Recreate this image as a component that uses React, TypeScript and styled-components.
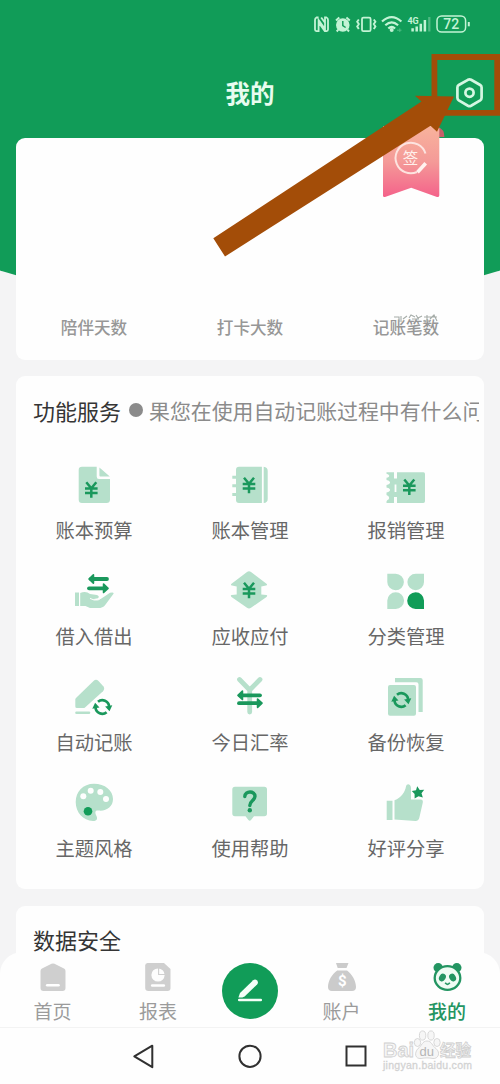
import React from 'react';
import styled, { createGlobalStyle } from 'styled-components';

const GREEN = '#119c58';
const DARK = '#1a985c';
const LIGHT = '#b6e0cb';
const STATUS = '#c3f3d5';

const GlobalStyle = createGlobalStyle`
  * { box-sizing: border-box; }
  body { margin: 0; font-family: "Noto Sans", "Noto Sans CJK SC", sans-serif; }
  svg { display: block; flex: none; overflow: visible; }
`;

const Page = styled.div`
  position: relative;
  width: 500px;
  height: 1084px;
  overflow: hidden;
  display: flex;
  flex-direction: column;
  background: #f4f4f5;
  font-family: "Noto Sans CJK SC", sans-serif;
`;

const Backdrop = styled.div`
  position: absolute;
  top: 0;
  left: -100px;
  width: 700px;
  height: 303px;
  background: ${GREEN};
  border-radius: 0 0 50% 50% / 0 0 108px 108px;
`;

const StatusBar = styled.header`
  position: relative;
  height: 48px;
  padding: 0 30px 0 0;
  display: flex;
  align-items: center;
  justify-content: flex-end;
`;

const TitleBar = styled.div`
  position: relative;
  height: 90px;
  padding: 0 16px;
  display: grid;
  grid-template-columns: 1fr auto 1fr;
  align-items: center;
`;

const Title = styled.h1`
  grid-column: 2;
  margin: 0 0 1px;
  color: #e8fcef;
  font-size: 24.5px;
  line-height: 36px;
  font-weight: 700;
`;

const SettingsButton = styled.div`
  justify-self: end;
`;

const Content = styled.main`
  position: relative;
  height: 836px;
  flex: none;
  padding: 0 16px;
  display: flex;
  flex-direction: column;
  gap: 16.5px;
  overflow: hidden;
`;

const Card = styled.section<{ $height: number }>`
  flex: none;
  height: ${({ $height }) => $height}px;
  background: #fefefe;
  border-radius: 9px;
`;

const StatsCard = styled(Card)`
  display: flex;
  align-items: flex-end;
  padding-bottom: 21px;
`;

const Stat = styled.div`
  position: relative;
  flex: 1;
  text-align: center;
  font-size: 16.6px;
  line-height: 24px;
  font-weight: 500;
  color: #979797;
`;

const Smudge = styled.div`
  position: absolute;
  left: 64px;
  top: -1px;
`;

const SectionHead = styled.div`
  display: flex;
  align-items: center;
  padding: 16px 5px 0 17px;
  height: 51px;
`;

const SectionTitle = styled.h2`
  margin: 0;
  flex: none;
  font-size: 22px;
  line-height: 36px;
  font-weight: 400;
  color: #353535;
`;

const Dot = styled.i`
  flex: none;
  width: 14px;
  height: 14px;
  margin: 1px 6px 0 8px;
  border-radius: 50%;
  background: #8b8b8b;
`;

const Notice = styled.span`
  flex: 1;
  overflow: hidden;
  white-space: nowrap;
  font-size: 20.9px;
  line-height: 36px;
  color: #8b8b8b;
`;

const ServiceGrid = styled.div`
  display: grid;
  grid-template-columns: repeat(3, 156px);
  grid-auto-rows: 106px;
  padding-top: 38px;
`;

const Service = styled.div`
  display: flex;
  flex-direction: column;
  align-items: center;
  gap: 11px;
  color: #676767;
  font-size: 19.3px;
  line-height: 28px;
`;

const TabBar = styled.nav`
  position: relative;
  flex: none;
  height: 76px;
  margin-top: -22px;
  display: grid;
  grid-template-columns: 105px 106px 78px 105px 106px;
  background: #fefefe;
  border-radius: 22px 22px 0 0;
  border-bottom: 1px solid #f3f3f3;
`;

const Tab = styled.div<{ $active?: boolean }>`
  display: flex;
  flex-direction: column;
  align-items: center;
  gap: 6px;
  padding-top: 11px;
  font-size: 19px;
  line-height: 28px;
  font-weight: ${({ $active }) => ($active ? 500 : 400)};
  color: ${({ $active }) => ($active ? '#239562' : '#9b9b9b')};
`;

const AddButton = styled.div`
  align-self: center;
  justify-self: center;
  width: 56px;
  height: 56px;
  margin-top: 2px;
  border-radius: 50%;
  background: ${GREEN};
  display: flex;
  align-items: center;
  justify-content: center;
`;

const SystemNav = styled.footer`
  position: relative;
  flex: 1;
  background: #fefefe;
  display: flex;
  justify-content: center;
  align-items: center;
  gap: 81.5px;
`;

const Watermark = styled.div`
  position: absolute;
  left: 383px;
  top: 0;
  width: 92px;
  font-family: "Liberation Sans", "Noto Sans CJK SC", sans-serif;
`;

const RibbonLayer = styled.div`
  position: absolute;
  left: 380px;
  top: 122px;
`;

const PointerLayer = styled.div`
  position: absolute;
  left: 0;
  top: 0;
`;

const Yen = ({ x, y }: { x: number; y: number }) => (
  <path
    transform={`translate(${x} ${y})`}
    d="M-5-7.5 0-1.5 5-7.5M0-1.5V8M-6.3-1.2H6.3M-6.3 3.2H6.3"
    fill="none"
    stroke={DARK}
    strokeWidth="2.5"
  />
);

const Swap = ({ x, y, w, gap, dx }: { x: number; y: number; w: number; gap: number; dx: number }) => (
  <g transform={`translate(${x} ${y})`} stroke={DARK} strokeWidth="3.8" strokeLinecap="round" strokeLinejoin="round" fill={DARK}>
    <path d={`M3 0H${w}`} />
    <path d="M1 0 5.4-4.1V4.1Z" strokeWidth="1.7" />
    <path d={`M${dx} ${gap}H${w + dx - 3}`} />
    <path d={`M${w + dx} ${gap}l-4.4-4.1v8.2Z`} strokeWidth="1.7" />
  </g>
);

const Refresh = ({ x, y }: { x: number; y: number }) => (
  <g transform={`translate(${x} ${y})`} fill="none" stroke={DARK} strokeWidth="2.7">
    <path d="M-4.3-5.2A6.8 6.8 0 0 1 6.8-.5M4.3 5.2A6.8 6.8 0 0 1-6.8 .5" />
    <path d="M2.8-.4 10-1.8 7.2 4.2ZM-2.8 .4-10 1.8-7.2-4.2Z" fill={DARK} stroke="none" />
  </g>
);

const services: { label: string; icon: React.ReactNode }[] = [
  {
    label: '账本预算',
    icon: (
      <>
        <path fill={LIGHT} d="M8 1.7H22.7V11.5Q22.7 14 25 14H36V34.5Q36 38 32.5 38H8Q4.7 38 4.7 34.5V5Q4.7 1.7 8 1.7ZM25.4 2.5 35.8 11.6H26.5Q25.4 11.6 25.4 10.5Z" />
        <Yen x={17.3} y={24.7} />
      </>
    ),
  },
  {
    label: '账本管理',
    icon: (
      <>
        <path fill={LIGHT} d="M9 1.7H31.9V38H9Q6 38 6 35V31H2.3V28H6V22.3H2.3V19.3H6V13.7H2.3V10.7H6V5Q6 1.7 9 1.7ZM33.7 1.7Q37.7 2 37.7 6V34Q37.7 37.7 33.7 38Z" />
        <Yen x={19} y={20.3} />
      </>
    ),
  },
  {
    label: '报销管理',
    icon: (
      <>
        <path fill={LIGHT} d="M.5 7.3H8V13.5H11V7.3H37.5Q39 7.3 39 9V36.3Q39 38 37.3 38H11V32H8V38H.5Q0 35.5 2.5 34.5 4 33 2.5 31.3L.5 30V27.5Q4.5 26.5 4 24.5 3.5 23 .5 22.5V20Q4.5 19 4 17 3.5 15.5.5 15V12.8Q3.5 12.5 3.2 10.6 2.8 9 .5 8.7Z" />
        <path d="M8.6 19.5H10.4V27H8.6Z" fill="#fefefe" />
        <Yen x={23.3} y={22} />
      </>
    ),
  },
  {
    label: '借入借出',
    icon: (
      <>
        <path fill={LIGHT} d="M1 21.5H5V35H1ZM6.2 22Q12 19.8 16 23L23 24Q26 25.2 24 27.3L18.5 28.3Q23 30 27 27.8L36 21.8Q39.5 20.8 39.7 22.5L31 34.2Q29 37 24 37H16L11.5 35H6.2Z" />
        <path d="M16 27.4 20 29Q25 29.8 27 27" stroke="#fefefe" strokeWidth="1" fill="none" />
        <Swap x={14} y={8} w={19} gap={9.3} dx={1} />
      </>
    ),
  },
  {
    label: '应收应付',
    icon: (
      <>
        <path fill={LIGHT} d="M17 1Q19 -.6 21 1L36.5 12.7Q37.8 14.2 36 14.4L31.3 15.5V23.5L36.3 24Q38 24.5 36.5 26L21 36.8Q19 38 17 36.8L1.5 26Q0 24.5 1.7 24L6.7 23.5V15.5L2 14.4Q.2 14.2 1.5 12.7Z" />
        <Yen x={19} y={19.3} />
      </>
    ),
  },
  {
    label: '分类管理',
    icon: (
      <>
        <path fill={LIGHT} d="M1.3 2.7H9.7A8.3 8.3 0 1 1 1.3 11ZM38 2.7H29.7A8.3 8.3 0 1 0 38 11ZM1.3 38H9.7A8.4 8.4 0 1 0 1.3 29.6Z" />
        <path fill={GREEN} d="M38 38H29.7A8.4 8.4 0 1 1 38 29.6Z" />
      </>
    ),
  },
  {
    label: '自动记账',
    icon: (
      <>
        <path fill={LIGHT} d="M19.5 4Q22 1.6 24.5 4L29.3 9.3Q31.2 12 29 14.2L11 30.5Q10.4 31 9.5 31H3Q1.3 31 1.3 29.4V22.5Q1.3 21.8 2 21Z" />
        <path d="M2.5 35.7H15" stroke={LIGHT} strokeWidth="2.6" strokeLinecap="round" />
        <Refresh x={28.3} y={30} />
      </>
    ),
  },
  {
    label: '今日汇率',
    icon: (
      <>
        <path d="M9.5 2.5 19.7 13 30 2.5M19.7 13V35" fill="none" stroke={LIGHT} strokeWidth="4.8" strokeLinecap="round" />
        <Swap x={7} y={18.3} w={23} gap={7.9} dx={2} />
      </>
    ),
  },
  {
    label: '备份恢复',
    icon: (
      <>
        <path fill={LIGHT} d="M4 8H28Q30 8 30 10V36.7Q30 38.7 28 38.7H4Q2 38.7 2 36.7V10Q2 8 4 8ZM9 1H34.5Q36.7 1 36.7 3.2V35H32.5V7.3Q32.5 5.2 30.4 5.2H9Z" />
        <Refresh x={15.3} y={23} />
      </>
    ),
  },
  {
    label: '主题风格',
    icon: (
      <>
        <path fill={LIGHT} d="M20 .7C31 .7 39 7.5 39 16 39 24 32 28.5 24.5 27.5 20.5 27 21 30 22.5 33 24 36.5 22.5 38 19 38 9 37.5 1.7 29.5 1.7 19 1.7 8.5 9 .7 20 .7Z" />
        <g fill="#fefefe">
          <circle cx="9.3" cy="13.3" r="3" />
          <circle cx="16.7" cy="7.7" r="3" />
          <circle cx="26.3" cy="9" r="3" />
          <circle cx="32" cy="16" r="3" />
        </g>
        <circle cx="14" cy="28.3" r="4.3" fill={GREEN} />
      </>
    ),
  },
  {
    label: '使用帮助',
    icon: (
      <>
        <path fill={LIGHT} d="M5 3.7H34.3Q37 3.7 37 6.5V30.5Q37 33.3 34.3 33.3H24L21 37Q19.7 38.6 18.4 37L15.5 33.3H5Q2.3 33.3 2.3 30.5V6.5Q2.3 3.7 5 3.7Z" />
        <path d="M14.8 13.5C15 7.5 25 7.5 25 13.3 25 17.5 19.8 17.5 19.8 22.5" fill="none" stroke={DARK} strokeWidth="3.4" strokeLinecap="round" />
        <circle cx="19.8" cy="27.3" r="2.2" fill={DARK} />
      </>
    ),
  },
  {
    label: '好评分享',
    icon: (
      <>
        <path fill={LIGHT} d="M.7 17.7H6.5V37H.7ZM8.5 17.3C15.5 14.5 18.8 9.5 20 3.5 20.7 0 24.8.8 25 5V16.5H34.5Q37.3 16.5 36.8 19.5L33.5 34Q32.8 38 29.5 38L8.5 36.5Z" />
        <path fill={DARK} d="M31.2 3.2 33.7 7 38.2 6.8 35.5 10.3 36.8 14.6 32.5 13.2 28.6 15.5 28.6 11 25.8 8 30 7.2Z" />
      </>
    ),
  },
];

const StatusIcons = () => (
  <svg width="156" height="18" viewBox="314 15 156 18" fill="none" stroke={STATUS} strokeWidth="1.8">
    <path d="M318.6 17.5H316.5Q315 18.3 315 20V29.5Q315 31 316.5 31.2H318.6V20L325 29V17.5H326.5Q328 18 328 20V29.5Q328 31 326.5 31.2H324.8L318.6 22.5M321.2 17.5 325 22.7" strokeWidth="1.8" />
    <circle cx="342.8" cy="25" r="6.8" fill={STATUS} stroke="none" />
    <path d="M336 20.5 339.3 17.6M349.8 20.5 346.4 17.6M338.3 29.7 336.7 31.5M347.4 29.7 349 31.5" strokeWidth="2" />
    <path d="M342.8 21V25.5L345.6 27.5" stroke={GREEN} strokeWidth="1.5" />
    <rect x="362" y="17.6" width="8.6" height="13.6" rx="1.4" />
    <path d="M358.8 19.5 357.2 21.8 358.8 24 357.2 26.4 358.8 29M373.8 19.5 375.4 21.8 373.8 24 375.4 26.4 373.8 29" strokeWidth="1.9" />
    <path d="M382 21.5Q391.7 12.8 401.4 21.5M385.3 25.2Q391.7 19.5 398.1 25.2M388.3 28.5Q391.7 25.5 395.1 28.5" strokeWidth="2.2" />
    <circle cx="391.7" cy="30" r="2" fill={STATUS} stroke="none" />
    <path d="M397 30.2H401.5M399.8 28.4V32" stroke="#4fbd84" strokeWidth="1" />
    <path d="M412.6 31.5V28.2M416.7 31.5V26.5M420.8 31.5V23.8M424.9 31.5V20" strokeWidth="2.5" />
    <path d="M429.3 31.5V17" stroke="#4fb983" strokeWidth="2.3" />
    <text x="407.4" y="23.8" fill={STATUS} stroke="none" fontFamily="Roboto, sans-serif" fontSize="9" fontWeight="700">4G</text>
    <rect x="437" y="16" width="28.6" height="16" rx="4.6" strokeWidth="1.5" />
    <path d="M468.8 22V26.3" strokeWidth="2" />
    <text x="451.3" y="29.1" fill={STATUS} stroke="none" textAnchor="middle" fontFamily="Roboto, sans-serif" fontSize="14" fontWeight="500">72</text>
  </svg>
);

const HomeIcon = () => (
  <svg width="28" height="28" viewBox="0 0 28 28">
    <path fill="#cfcfcf" d="M12.5.8Q14 0 15.5.8L25 5.4Q26.5 6.3 26.5 8V25Q26.5 28 23.5 28H4.5Q1.5 28 1.5 25V8Q1.5 6.3 3 5.4Z" />
    <path d="M8.2 22.2H19.5" stroke="#fff" strokeWidth="2.6" strokeLinecap="round" />
  </svg>
);

const ReportIcon = () => (
  <svg width="28" height="28" viewBox="0 0 28 28">
    <path fill="#cfcfcf" d="M3.5 0H20L26.5 6V25Q26.5 28 23.5 28H4.5Q1.2 28 1.2 25V2.5Q1.2 0 3.5 0Z" />
    <circle cx="14" cy="12" r="6.6" fill="#fdfdfd" />
    <path d="M14.6 5V11.5H21" fill="none" stroke="#cfcfcf" strokeWidth="1.1" />
    <path d="M8.2 22.5H19.8" stroke="#fff" strokeWidth="2.6" strokeLinecap="round" />
  </svg>
);

const AccountIcon = () => (
  <svg width="28" height="28" viewBox="0 0 28 28">
    <path fill="#cbcbcb" d="M8 0H20.5L18.5 5H9.7ZM9.2 7.5H19C24 11 28 18 28 24Q28 28 24 28H4Q0 28 0 24C0 18 4 11 9.2 7.5Z" />
    <text x="14.2" y="23.2" textAnchor="middle" fill="#fff" fontFamily="Roboto, sans-serif" fontSize="15" fontWeight="700">$</text>
  </svg>
);

const PandaIcon = () => (
  <svg width="29" height="28" viewBox="0 0 29 28">
    <g fill="#239562">
      <circle cx="5.2" cy="4.7" r="4.7" />
      <circle cx="23.8" cy="4.7" r="4.7" />
    </g>
    <ellipse cx="14.5" cy="15" rx="12.8" ry="11.8" fill="#effcf4" stroke="#239562" strokeWidth="2.3" />
    <g fill="#239562">
      <ellipse cx="9.4" cy="14.5" rx="3.2" ry="4.1" transform="rotate(30 9.4 14.5)" />
      <ellipse cx="19.6" cy="14.5" rx="3.2" ry="4.1" transform="rotate(-30 19.6 14.5)" />
    </g>
    <path d="M12.2 19.8Q14.5 22.8 16.8 19.8" fill="none" stroke="#239562" strokeWidth="1.7" />
  </svg>
);

export default function App() {
  return (
    <>
      <GlobalStyle />
      <Page>
        <Backdrop />
        <StatusBar>
          <StatusIcons />
        </StatusBar>
        <TitleBar>
          <Title>我的</Title>
          <SettingsButton>
            <svg width="29" height="30" viewBox="0 0 29 30" fill="none" stroke="#d5f7e2" strokeWidth="2.7">
              <path d="M12.9 1.8Q14.5.9 16.1 1.8L25.2 7Q26.6 7.9 26.6 9.6V19.7Q26.6 21.4 25.2 22.3L16.1 27.7Q14.5 28.5 12.9 27.7L3.8 22.3Q2.4 21.4 2.4 19.7V9.6Q2.4 7.9 3.8 7Z" />
              <circle cx="14.5" cy="14.7" r="4.1" />
            </svg>
          </SettingsButton>
        </TitleBar>
        <Content>
          <StatsCard $height={221.5}>
            <Stat>陪伴天数</Stat>
            <Stat>打卡大数</Stat>
            <Stat>
              记账笔数
              <Smudge>
                <svg width="50" height="9" viewBox="0 0 50 9" fill="none" stroke="#a5aca8" strokeWidth="1.1">
                  <path d="M2 3H7V8M9 2V8M11 5 15 2M17 4 19 1 23 3M20 5H27M24 1 26 4 30 2M32 3H45M35 1V6M38 5 42 1 45 7M31 7H37" />
                </svg>
              </Smudge>
            </Stat>
          </StatsCard>
          <Card $height={513}>
            <SectionHead>
              <SectionTitle>功能服务</SectionTitle>
              <Dot />
              <Notice>果您在使用自动记账过程中有什么问</Notice>
            </SectionHead>
            <ServiceGrid>
              {services.map(({ label, icon }) => (
                <Service key={label}>
                  <svg width="40" height="40" viewBox="0 0 40 40">{icon}</svg>
                  {label}
                </Service>
              ))}
            </ServiceGrid>
          </Card>
          <Card $height={100}>
            <SectionHead>
              <SectionTitle>数据安全</SectionTitle>
            </SectionHead>
          </Card>
        </Content>
        <TabBar>
          <Tab><HomeIcon />首页</Tab>
          <Tab><ReportIcon />报表</Tab>
          <AddButton>
            <svg width="28" height="28" viewBox="0 0 28 28" fill="#f4fff8">
              <path d="M2.4 20.6 4 16 17.2 3.3Q19.2 1.6 21.1 3.6 22.8 5.6 21.1 7.5L8.6 19.6 6.3 20.6Z" />
              <path d="M3.2 23H24.8" stroke="#f4fff8" strokeWidth="2.5" strokeLinecap="round" />
            </svg>
          </AddButton>
          <Tab><AccountIcon />账户</Tab>
          <Tab $active><PandaIcon />我的</Tab>
        </TabBar>
        <SystemNav>
          <svg width="24" height="24" viewBox="0 0 24 24" fill="none" stroke="#303030" strokeWidth="2" strokeLinejoin="round">
            <path d="M19.3 1.7V23.2L1.3 12.4Z" />
          </svg>
          <svg width="24" height="24" viewBox="0 0 24 24" fill="none" stroke="#303030" strokeWidth="2">
            <circle cx="12" cy="12.3" r="10.6" />
          </svg>
          <svg width="24" height="24" viewBox="0 0 24 24" fill="none" stroke="#303030" strokeWidth="2">
            <rect x="2.5" y="2.5" width="19" height="19" />
          </svg>
          <Watermark>
            <svg width="92" height="46" viewBox="0 0 92 46" fill="#f6f6f6" stroke="#cfcfcf" strokeWidth=".8">
              <ellipse cx="34.5" cy="14.5" rx="3.2" ry="4" />
              <ellipse cx="39.6" cy="7.5" rx="3.2" ry="4.6" />
              <ellipse cx="48" cy="7.5" rx="3.2" ry="4.6" />
              <ellipse cx="54" cy="14.5" rx="3.2" ry="4" />
              <path d="M44 13C49 13 49 18 53 20.5 58 25 55 31 50 30.5 46 29.7 42 29.7 38 30.5 32 31 31 25 35 20.5 39 18 39 13 44 13Z" />
              <g fontWeight="700">
                <text x="0" y="29" fontSize="20" textLength="31" lengthAdjust="spacingAndGlyphs">Bai</text>
                <text x="36.5" y="27.5" fontSize="13" fontWeight="400" stroke="none" fill="#b5b5b5">du</text>
                <text x="57" y="28" fontSize="15.6">经验</text>
              </g>
              <text x="0" y="41" fontSize="10.5" fill="#d6d6d6" strokeWidth=".3" textLength="89">jingyan.baidu.com</text>
            </svg>
          </Watermark>
        </SystemNav>
        <RibbonLayer>
          <svg width="66" height="78" viewBox="380 122 66 78">
            <defs>
              <linearGradient id="ribbon" x1="0" y1="0" x2="0" y2="1">
                <stop offset="0" stopColor="#f8b39c" />
                <stop offset=".5" stopColor="#f49a98" />
                <stop offset="1" stopColor="#f4628a" />
              </linearGradient>
            </defs>
            <path d="M438 127Q444.4 129 444.4 137H438Z" fill="#c4606a" />
            <path d="M383 126H437Q439.3 126 439.3 129V195.5Q439 197.5 437 197L411.2 187.7 385 197Q383 197.5 383 195.5Z" fill="url(#ribbon)" />
            <path d="M425.5 153.5A15.3 15.3 0 1 0 417 172" fill="none" stroke="#fde3df" strokeWidth="2" />
            <path d="M417.5 172.3 425.7 163.3" stroke="#fff2ef" strokeWidth="3.6" />
            <text x="410.4" y="163.8" textAnchor="middle" fill="#fff0ec" fontSize="15.5">签</text>
          </svg>
        </RibbonLayer>
        <PointerLayer>
          <svg width="500" height="270" viewBox="0 0 500 270" fill="#a34d08">
            <path fillRule="evenodd" d="M431.5 54H500V115.7H431.5ZM437.3 60V110H494.3V60Z" />
            <path d="M213.3 238.3 421.5 101.5 415 95.8 454 96.4 437 131.7 430.5 125.8 225 256.5Z" />
          </svg>
        </PointerLayer>
      </Page>
    </>
  );
}
